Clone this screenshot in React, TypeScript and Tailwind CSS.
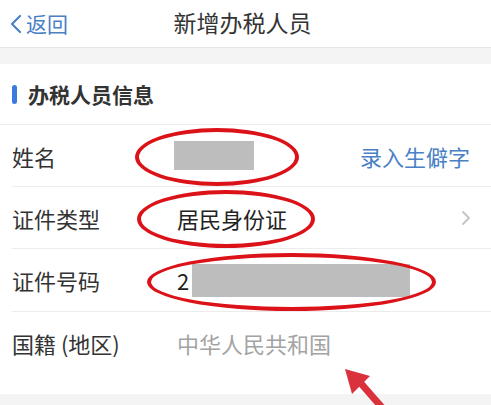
import React from "react";

const font = { fontFamily: '"Noto Sans CJK SC", "Noto Sans", sans-serif' };

function Ellipse({ className }: { className: string }) {
  return (
    <div
      className={`absolute rounded-[50%] border-[4px] border-[#dc1219] pointer-events-none ${className}`}
    />
  );
}

export default function App() {
  return (
    <div
      className="w-[491px] h-[405px] overflow-hidden bg-white text-[#333] flex flex-col relative"
      style={font}
    >
      {/* Header */}
      <div className="h-[48px] grid grid-cols-[1fr_auto_1fr] items-center border-b border-[#e6e6e6] shrink-0">
        <div className="flex items-center pl-[9px] gap-[3px] text-[#4a80c4] text-[21px] leading-none">
          <svg width="14" height="20" viewBox="0 0 14 20" fill="none">
            <path d="M11 2 L3 10 L11 18" stroke="#4a80c4" strokeWidth="2.2" strokeLinecap="round" strokeLinejoin="round" />
          </svg>
          <span className="-mt-[1px]">返回</span>
        </div>
        <div className="text-[23px] leading-none text-[#333] -ml-[6px] -mt-[3px]">新增办税人员</div>
        <div />
      </div>
      {/* gray band */}
      <div className="h-[16px] bg-[#f4f4f4] shrink-0" />
      {/* Section header */}
      <div className="h-[61px] flex items-center pl-[12px] gap-[11px] border-b border-[#ececec] shrink-0">
        <div className="w-[5px] h-[19px] rounded-full bg-[#3b7be0]" />
        <div className="text-[21px] font-bold leading-none text-[#333]">办税人员信息</div>
      </div>
      {/* Rows */}
      <div className="pl-[12px] flex flex-col">
        <div className="h-[62px] flex items-center border-b border-[#ececec] relative">
          <div className="w-[165px] text-[22px] leading-none">姓名</div>
          <div className="w-[80px] h-[29px] bg-[#bdbdbd] ml-[-3px]" />
          <div className="ml-auto mr-[21px] text-[22px] leading-none text-[#4a80c4]">录入生僻字</div>
          <Ellipse className="left-[123px] top-[3px] w-[164px] h-[58px]" />
        </div>
        <div className="h-[62px] flex items-center border-b border-[#ececec] relative">
          <div className="w-[165px] text-[22px] leading-none">证件类型</div>
          <div className="text-[22px] leading-none text-[#222]">居民身份证</div>
          <svg className="ml-auto mr-[20px]" width="10" height="16" viewBox="0 0 10 16" fill="none">
            <path d="M2 2 L8 8 L2 14" stroke="#c4c4c4" strokeWidth="1.8" strokeLinecap="round" strokeLinejoin="round" />
          </svg>
          <Ellipse className="left-[125px] top-[3px] w-[178px] h-[58px]" />
        </div>
        <div className="h-[63px] flex items-center border-b border-[#ececec] relative">
          <div className="w-[165px] text-[22px] leading-none">证件号码</div>
          <div className="text-[22px] leading-none text-[#222]">2</div>
          <div className="w-[218px] h-[33px] bg-[#bdbdbd] ml-[3px]" />
          <Ellipse className="left-[135px] top-[4px] w-[289px] h-[58px]" />
        </div>
        <div className="h-[62px] flex items-center">
          <div className="w-[165px] text-[22px] leading-none">国籍 (地区)</div>
          <div className="text-[22px] leading-none text-[#a3a3a3]">中华人民共和国</div>
        </div>
      </div>
      <div className="flex-1 bg-white" />
      <div className="h-[11px] bg-[#f4f4f4] shrink-0" />
      {/* Arrow annotation */}
      <svg className="absolute left-[340px] top-[366px]" width="60" height="45" viewBox="0 0 60 45">
        <path d="M18 14 L45 45" stroke="#d9323c" strokeWidth="7" strokeLinecap="round" />
        <path d="M5 3 L30 10 L12 28 Z" fill="#d9323c" />
      </svg>
    </div>
  );
}
